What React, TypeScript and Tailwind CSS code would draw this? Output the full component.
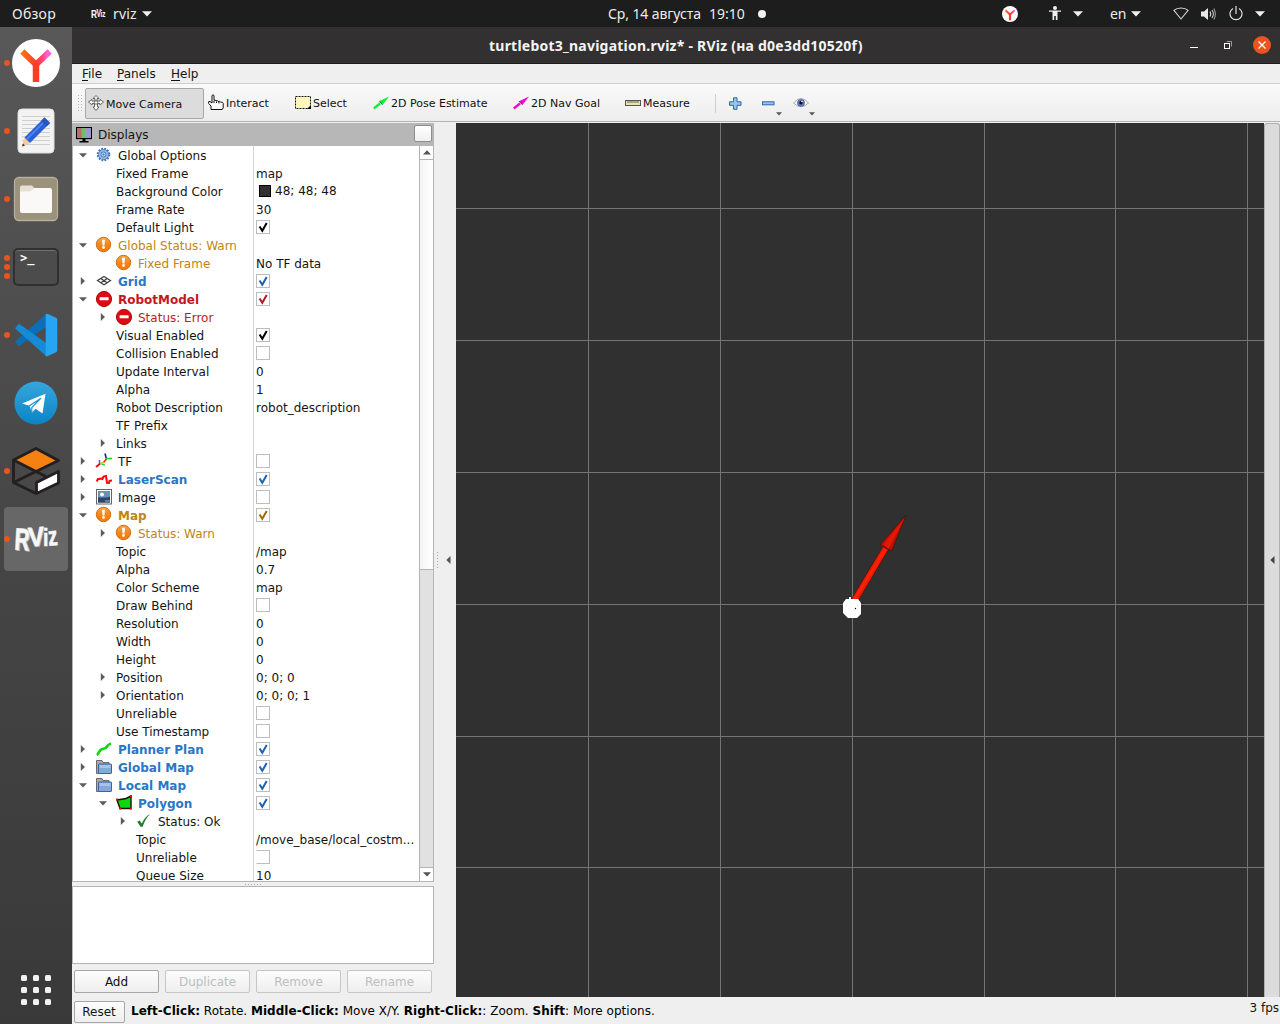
import React from "react";

type Tone = "plain" | "blue" | "red" | "warn";
type Row = {
  l: number;
  t: string;
  a?: "open" | "closed";
  i?: IconName;
  c?: Tone;
  b?: boolean;
  v?: string;
  check?: Tone | "off";
  swatch?: boolean;
};
type IconName = "gear" | "warn" | "error" | "grid" | "tf" | "laser" | "image" | "path" | "folder" | "polygon" | "ok";

const rows: Row[] = [
  { l: 0, t: "Global Options", a: "open", i: "gear" },
  { l: 1, t: "Fixed Frame", v: "map" },
  { l: 1, t: "Background Color", v: "48; 48; 48", swatch: true },
  { l: 1, t: "Frame Rate", v: "30" },
  { l: 1, t: "Default Light", check: "plain" },
  { l: 0, t: "Global Status: Warn", a: "open", i: "warn", c: "warn" },
  { l: 1, t: "Fixed Frame", i: "warn", c: "warn", v: "No TF data" },
  { l: 0, t: "Grid", a: "closed", i: "grid", c: "blue", b: true, check: "blue" },
  { l: 0, t: "RobotModel", a: "open", i: "error", c: "red", b: true, check: "red" },
  { l: 1, t: "Status: Error", a: "closed", i: "error", c: "red" },
  { l: 1, t: "Visual Enabled", check: "plain" },
  { l: 1, t: "Collision Enabled", check: "off" },
  { l: 1, t: "Update Interval", v: "0" },
  { l: 1, t: "Alpha", v: "1" },
  { l: 1, t: "Robot Description", v: "robot_description" },
  { l: 1, t: "TF Prefix" },
  { l: 1, t: "Links", a: "closed" },
  { l: 0, t: "TF", a: "closed", i: "tf", check: "off" },
  { l: 0, t: "LaserScan", a: "closed", i: "laser", c: "blue", b: true, check: "blue" },
  { l: 0, t: "Image", a: "closed", i: "image", check: "off" },
  { l: 0, t: "Map", a: "open", i: "warn", c: "warn", b: true, check: "warn" },
  { l: 1, t: "Status: Warn", a: "closed", i: "warn", c: "warn" },
  { l: 1, t: "Topic", v: "/map" },
  { l: 1, t: "Alpha", v: "0.7" },
  { l: 1, t: "Color Scheme", v: "map" },
  { l: 1, t: "Draw Behind", check: "off" },
  { l: 1, t: "Resolution", v: "0" },
  { l: 1, t: "Width", v: "0" },
  { l: 1, t: "Height", v: "0" },
  { l: 1, t: "Position", a: "closed", v: "0; 0; 0" },
  { l: 1, t: "Orientation", a: "closed", v: "0; 0; 0; 1" },
  { l: 1, t: "Unreliable", check: "off" },
  { l: 1, t: "Use Timestamp", check: "off" },
  { l: 0, t: "Planner Plan", a: "closed", i: "path", c: "blue", b: true, check: "blue" },
  { l: 0, t: "Global Map", a: "closed", i: "folder", c: "blue", b: true, check: "blue" },
  { l: 0, t: "Local Map", a: "open", i: "folder", c: "blue", b: true, check: "blue" },
  { l: 1, t: "Polygon", a: "open", i: "polygon", c: "blue", b: true, check: "blue" },
  { l: 2, t: "Status: Ok", a: "closed", i: "ok" },
  { l: 2, t: "Topic", v: "/move_base/local_costm..." },
  { l: 2, t: "Unreliable", check: "off" },
  { l: 2, t: "Queue Size", v: "10" },
];

const toneClass: Record<Tone, string> = {
  plain: "text-[#141414]",
  blue: "text-[#2a76c6]",
  red: "text-[#c2191c]",
  warn: "text-[#c0860f]",
};
const checkColor: Record<Tone, string> = { plain: "#000", blue: "#1f63a8", red: "#b01c20", warn: "#a06c00" };
const indent = ["ml-0", "ml-[20px]", "ml-[40px]"];

function TreeIcon({ name }: { name: IconName }) {
  const p = { width: 16, height: 16, viewBox: "0 0 16 16", className: "shrink-0 overflow-visible" };
  switch (name) {
    case "gear":
      return (
        <svg {...p}>
          <circle cx="7.5" cy="7.5" r="5.8" fill="none" stroke="#3f75bb" strokeWidth="2" strokeDasharray="1.8 1.24" />
          <circle cx="7.5" cy="7.5" r="5" fill="#9dbde3" stroke="#4a7fc4" />
          <circle cx="7.5" cy="7.5" r="2.6" fill="#c4d9f0" stroke="#3f75bb" />
          <circle cx="7.5" cy="7.5" r="1" fill="#3f75bb" />
        </svg>
      );
    case "warn":
      return (
        <svg {...p}>
          <defs>
            <linearGradient id="warnFill" x1="0" y1="0" x2="0" y2="1">
              <stop offset="0" stopColor="#fba64c" />
              <stop offset="0.5" stopColor="#f68519" />
              <stop offset="1" stopColor="#f57900" />
            </linearGradient>
          </defs>
          <circle cx="7.5" cy="7.5" r="7.2" fill="url(#warnFill)" stroke="#c9670a" strokeWidth="0.9" />
          <path d="M6 2.8h3l-.5 5.6h-2z" fill="#fff" />
          <circle cx="7.5" cy="10.5" r="1.4" fill="#fff" />
        </svg>
      );
    case "error":
      return (
        <svg {...p}>
          <circle cx="8" cy="8" r="7.6" fill="#dc0d12" stroke="#a40000" strokeWidth="0.9" />
          <rect x="3.6" y="6.3" width="9" height="3" rx=".5" fill="#fff" />
        </svg>
      );
    case "grid":
      return (
        <svg {...p} fill="none" stroke="#3c3c3c" strokeWidth="1.2">
          <path d="M8 3.5 14.5 7.5 8 11.7 1.5 7.5zM4.8 5.5l6.4 4.2M11.2 5.5 4.8 9.7" />
        </svg>
      );
    case "tf":
      return (
        <svg {...p} fill="none">
          <path d="M9 .5 10.3 5.5" stroke="#1515e8" strokeWidth="1.6" />
          <path d="M10 5.5H16M4 10.5 9 12.2" stroke="#10e010" strokeWidth="1.3" />
          <path d="M10.500 6 7.300 9.800" stroke="#e83018" strokeWidth="1.7" />
          <path d="M3.500 7v4" stroke="#5555e8" strokeWidth="1.500" />
          <path d="M0 14 4 10.700" stroke="#e81010" strokeWidth="1.800" />
          <path d="M4 10.500 8 9.500" stroke="#c8c820" strokeWidth="1.300" />
        </svg>
      );
    case "laser":
      return (
        <svg {...p} fill="none" stroke="#fa0505" strokeWidth="2">
          <path d="M.8 10.500 1.800 8.200 5 7.500 6.500 8 7.500 5.500 10 5 11 11.800 13 12 13.500 9.800 16 9.500" />
        </svg>
      );
    case "image":
      return (
        <svg {...p}>
          <rect x=".5" y=".5" width="15" height="14.500" fill="#fff" stroke="#62666a" />
          <rect x="2" y="2" width="12" height="11.500" fill="#28466f" />
          <rect x="2" y="2" width="12" height="6.500" fill="#6f8fb4" />
          <circle cx="6" cy="5.500" r="2" fill="#ffffd0" />
          <path d="M2 9.500 6 9l3 .5 5-2v6H2z" fill="#2c456a" />
          <path d="M9 12h5" stroke="#c4cedb" strokeWidth=".8" />
        </svg>
      );
    case "path":
      return (
        <svg {...p} fill="none" stroke="#0bd80b" strokeWidth="2.600">
          <path d="M.8 14C3.500 12.500 3 7.800 7.500 7.800 11.500 7.800 10.500 3.200 15 2.800" />
        </svg>
      );
    case "folder":
      return (
        <svg {...p}>
          <path d="M.5 14.500v-13h5.500l1 2h6v11z" fill="#aaa" stroke="#6a6a6a" />
          <rect x="2.500" y="5" width="13" height="9.500" rx=".6" fill="#82a9d8" stroke="#3465a4" />
          <path d="M3.500 6h11v3h-11z" fill="#a7c4e6" />
        </svg>
      );
    case "polygon":
      return (
        <svg {...p}>
          <path d="M1 5 10 3.500 15 1V13.500L4 13.500z" fill="#0bd80b" stroke="#111" strokeWidth="1.400" />
          <path d="M0 3.500h2v2H0zM14 0h2v2h-2zM14 12.500h2v2h-2zM3 12.500h2v2H3z" fill="#f00" />
        </svg>
      );
    case "ok":
      return (
        <svg {...p}>
          <path d="M1.200 8.800 3.800 7.500 5.800 10.500C8 6 10.500 2.500 14 1 10.500 4.500 8.500 8.500 6.600 13.800H4.600z" fill="#1f7c2b" />
        </svg>
      );
  }
}

function Check({ tone, cut }: { tone: Tone | "off"; cut?: boolean }) {
  return (
    <span
      className={"mb-px ml-[2px] block h-[14px] w-[14px] border border-[#bdbdbd] bg-white " + (cut ? "border-l-transparent" : "")}
    >
      {tone !== "off" && (
        <svg width="12" height="12" viewBox="0 0 12 12">
          <path d="M2.600 5.500 5.300 9.800 9.700 2" fill="none" stroke={checkColor[tone]} strokeWidth="2" />
        </svg>
      )}
    </span>
  );
}

function TreeRow({ r, cut }: { r: Row; cut: boolean }) {
  return (
    <div className="flex h-[18px] shrink-0 whitespace-pre">
      <div className="flex w-[181px] shrink-0 items-center border-r border-[#d4d4d4]">
        <span className={"flex w-[20px] shrink-0 justify-center " + indent[r.l]}>
          {r.a === "open" && (
            <svg width="8" height="5" viewBox="0 0 8 5">
              <path d="M0 .3h8L4 4.500z" fill="#5c5c5c" />
            </svg>
          )}
          {r.a === "closed" && (
            <svg width="6" height="8" viewBox="0 0 6 8">
              <path d="M.8 0v8L5 4z" fill="#5c5c5c" />
            </svg>
          )}
        </span>
        <span className="flex items-center pl-[3px]">
          {r.i && <TreeIcon name={r.i} />}
          <span className={"pt-px leading-[18px] " + (r.i ? "ml-[6px] " : "") + (r.b ? "font-bold " : "") + toneClass[r.c ?? "plain"]}>
            {r.t}
          </span>
        </span>
      </div>
      <div className="flex min-w-0 items-center">
        {r.swatch && <span className="ml-[5px] block h-3 w-3 border border-black bg-[#303030]" />}
        {r.v && <span className={r.swatch ? "ml-[4px] leading-[18px]" : "ml-[2px] pt-px leading-[18px]"}>{r.v}</span>}
        {r.check && <Check tone={r.check} cut={cut} />}
      </div>
    </div>
  );
}

function Caret({ className = "" }: { className?: string }) {
  return (
    <svg width="10" height="6" viewBox="0 0 10 6" className={className}>
      <path d="M0 .3h10L5 5.500z" fill="#f0f0f0" />
    </svg>
  );
}

function YandexMark({ size }: { size: number }) {
  return (
    <svg width={size} height={size} viewBox="0 0 48 48">
      <defs>
        <linearGradient id="yaMark" x1="8" y1="14" x2="40" y2="14" gradientUnits="userSpaceOnUse">
          <stop offset="0" stopColor="#ff7a0c" />
          <stop offset=".5" stopColor="#ff3b30" />
          <stop offset=".72" stopColor="#ff4a7a" />
          <stop offset=".85" stopColor="#ff5fd8" />
        </linearGradient>
      </defs>
      <circle cx="24" cy="24" r="24" fill="#fff" />
      <path d="M10.300 12.500 24 25.500 37.700 12.500" fill="none" stroke="url(#yaMark)" strokeWidth="6" />
      <path d="M24 24V43" stroke="#ff3b26" strokeWidth="6.500" />
    </svg>
  );
}

function TopBar() {
  return (
    <header className="flex h-[27px] shrink-0 items-center bg-[#1d1d1d] font-['Noto_Sans',sans-serif] text-[14px] text-[#ececec]">
      <div className="flex w-[560px] items-center">
        <span className="ml-[12px] w-[79px] tracking-[0.25px]">Обзор</span>
        <svg
          width="15"
          height="14"
          viewBox="0 0 15 14"
          className="overflow-visible"
          fontSize="10"
          fontWeight="bold"
          fill="#fff"
          fontFamily="Liberation Sans, sans-serif"
        >
          <text x="0" y="10.500" textLength="6" lengthAdjust="spacingAndGlyphs">R</text>
          <text x="5.500" y="9.500" textLength="4.500" lengthAdjust="spacingAndGlyphs">V</text>
          <text x="9.500" y="9.500" textLength="5" lengthAdjust="spacingAndGlyphs" fontSize="9">iz</text>
        </svg>
        <span className="ml-[7px] tracking-[0.2px]">rviz</span>
        <Caret className="ml-[5px]" />
      </div>
      <div className="flex items-center pl-[48px] whitespace-pre">
        <span className="w-[101px] tracking-[-0.1px]">Ср, 14 августа</span>
        <span className="w-[49px]">19:10</span>
        <span className="block h-[8px] w-[8px] rounded-full bg-[#f2f2f2]" />
      </div>
      <div className="ml-auto flex items-center pr-[15px]">
        <YandexMark size={16} />
        <svg width="12" height="15" viewBox="0 0 12 15" className="ml-[31px]" fill="#f0f0f0">
          <circle cx="6" cy="2" r="2" />
          <path d="M0 4.500h12v1.300H8.500V14H6.800v-4H5.200v4H3.500V5.800H0z" />
        </svg>
        <Caret className="ml-[12px]" />
        <span className="ml-[27px] w-[16px] tracking-[-0.1px]">en</span>
        <Caret className="ml-[5px]" />
        <svg width="16" height="13" viewBox="0 0 16 13" className="ml-[32px]" fill="none" stroke="#d8d8d8" strokeWidth="1.100">
          <path d="M8 12 .9 3.400C4.500.2 11.500.2 15.100 3.400z" />
        </svg>
        <svg width="15" height="14" viewBox="0 0 15 14" className="ml-[12px]" fill="none" stroke="#e8e8e8" strokeWidth="1.100">
          <path d="M0 4.500h3L7 1v12L3 9.500H0z" fill="#e8e8e8" stroke="none" />
          <path d="M9 4.500q1.600 2.500 0 5" />
          <path d="M11 3q2.800 4 0 8" stroke="#c8c8c8" />
          <path d="M12.800 1.500q3.200 5.500 0 11" stroke="#9a9a9a" />
        </svg>
        <svg width="14" height="15" viewBox="0 0 14 15" className="ml-[13px]" fill="none" stroke="#e2e2e2" strokeWidth="1.200">
          <path d="M7 0v8M4 2.500A6 6 0 1 0 10 2.500" />
        </svg>
        <Caret className="ml-[12px]" />
      </div>
    </header>
  );
}

function DockItem({ dots = 0, active, children }: { dots?: number; active?: boolean; children: React.ReactNode }) {
  return (
    <div className={"mx-[4px] mb-[4px] flex h-[64px] items-center rounded-[4px] " + (active ? "bg-[#676767]" : "")}>
      <div className="flex w-[6px] shrink-0 flex-col items-center gap-[3px]">
        {Array.from({ length: dots }, (_, k) => (
          <span key={k} className="block h-[6px] w-[6px] shrink-0 rounded-full bg-[#e95420]" />
        ))}
      </div>
      <div className="flex w-[52px] justify-center">{children}</div>
    </div>
  );
}

function Dock() {
  return (
    <nav className="flex w-[72px] shrink-0 flex-col bg-linear-to-b from-[#585858] via-[#464646] to-[#393939] pt-[4px]">
      <DockItem dots={1}>
        <YandexMark size={48} />
      </DockItem>
      <DockItem dots={1}>
        <svg width="38" height="46" viewBox="0 0 38 46">
          <rect x="1" y="1" width="36" height="44" rx="4" fill="#f3f3f3" stroke="#dedede" />
          <path d="M5 8.500h28M5 12.500h28M5 16.500h28M5 20.500h28M5 24.500h28M5 28.500h28M5 32.500h28M5 36.500h28" stroke="#cfcfcf" />
          <path d="m5 38.500 2.500-9 5.500 5.500z" fill="#f6c99b" />
          <path d="m5 38.500 1-3 2 2z" fill="#333" />
          <path d="m7.500 29.500 20-20 5.500 5.500-20 20z" fill="#2b62d6" />
          <path d="m9.500 31.500 20-20" stroke="#5a8bef" strokeWidth="1.500" />
          <path d="m24 13 3.500-3.500 5.500 5.500-3.500 3.500z" fill="#2456c4" />
        </svg>
      </DockItem>
      <DockItem dots={1}>
        <svg width="46" height="46" viewBox="0 0 46 46">
          <rect x="1.500" y="1.500" width="43" height="43" rx="4.500" fill="#9b927c" stroke="#b6ae9c" strokeWidth="1.300" />
          <path d="M7 11.500q0-2 2-2h10l3 3h-2l-2 4H7z" fill="#e7e0d2" />
          <path d="M7 15.500h10l4-3.500h16q2 0 2 2v21q0 2-2 2H9q-2 0-2-2z" fill="#faf9f8" />
        </svg>
      </DockItem>
      <DockItem dots={3}>
        <div className="h-[38px] w-[46px] rounded-[5px] border-2 border-[#303030] bg-[#4c4c4c] pt-[2px] pl-[5px] font-['DejaVu_Sans_Mono',monospace] text-[12px] leading-[12px] font-bold text-white shadow-[inset_0_1px_0_#707070]">
          &gt;<span>_</span>
        </div>
      </DockItem>
      <DockItem dots={1}>
        <svg width="44" height="44" viewBox="0 0 44 44" className="ml-px">
          <path d="M0 28.700 4 33 31 14V1z" fill="#0a6fb8" />
          <path d="M0 15.300 4 10.700 31 30V43z" fill="#158bd8" />
          <path d="M30.700 1Q31.500.3 33 1L41 4.800q1.300.6 1.300 2v30.400q0 1.400-1.300 2L33 43q-1.500.7-2.300 0z" fill="#27a5f3" />
        </svg>
      </DockItem>
      <DockItem>
        <svg width="44" height="44" viewBox="0 0 44 44">
          <defs>
            <linearGradient id="tgDisc" x1="0" y1="0" x2="0" y2="1">
              <stop offset="0" stopColor="#36a6dd" />
              <stop offset="1" stopColor="#0b84c6" />
            </linearGradient>
          </defs>
          <circle cx="22" cy="22" r="21.500" fill="url(#tgDisc)" />
          <path d="M8 22.500 31.500 12.800 28.500 32.500 21.500 27.800 18 31.500 15.500 24.800z" fill="#fff" />
          <path d="M15 25 27 17.200 17.800 26.500 17.800 31" fill="none" stroke="#1f93d2" strokeWidth="1.200" />
        </svg>
      </DockItem>
      <DockItem dots={1}>
        <svg width="48" height="48" viewBox="0 0 48 48" fill="none" stroke="#231f20" strokeWidth="2.800" strokeLinejoin="round">
          <path d="M1.500 13v22.500L24 46.500M1.500 35.500 24 24.500" />
          <path d="m24 1.500 22.500 12L24 24.500 1.500 13z" fill="#f58113" />
          <path d="M24 24.500l10 5" />
          <path d="M24.500 35.500 46.500 24.500V36L24.500 46.500z" fill="#fff" />
        </svg>
      </DockItem>
      <DockItem dots={1} active>
        <svg
          width="46"
          height="46"
          viewBox="0 -6 46 46"
          className="overflow-visible"
          fontFamily="Liberation Sans, sans-serif"
          fontWeight="bold"
          fill="#f7f7f7"
          stroke="#f7f7f7"
          strokeWidth=".6"
        >
          <g fill="#b4b4b4" stroke="#b4b4b4" transform="translate(1.200 .8)">
            <text x="1.500" y="28" fontSize="31" textLength="15" lengthAdjust="spacingAndGlyphs" transform="rotate(3 8 18)">R</text>
            <text x="15" y="24" fontSize="27" textLength="16" lengthAdjust="spacingAndGlyphs" transform="rotate(-4 22 15)">V</text>
          </g>
          <text x="1.500" y="28" fontSize="31" textLength="15" lengthAdjust="spacingAndGlyphs" transform="rotate(3 8 18)">R</text>
          <text x="15" y="24" fontSize="27" textLength="16" lengthAdjust="spacingAndGlyphs" transform="rotate(-4 22 15)">V</text>
          <text x="30" y="24" fontSize="24" textLength="5.500" lengthAdjust="spacingAndGlyphs">i</text>
          <text x="35" y="23.500" fontSize="27" textLength="9.500" lengthAdjust="spacingAndGlyphs" transform="rotate(-5 39 16)">z</text>
        </svg>
      </DockItem>
      <div className="mt-auto mb-[19px] ml-[21px] grid w-[30px] grid-cols-3 gap-[6px]">
        {Array.from({ length: 9 }, (_, k) => (
          <span key={k} className="block h-[6px] w-[6px] rounded-[1.5px] bg-[#f2f2f2]" />
        ))}
      </div>
    </nav>
  );
}

function Tool({ className, icon, label }: { className: string; icon: React.ReactNode; label: string }) {
  return (
    <div className={"flex shrink-0 items-center whitespace-pre " + className}>
      {icon}
      <span className="ml-[2px] pt-[4px]">{label}</span>
    </div>
  );
}

function PoseArrow({ color }: { color: string }) {
  return (
    <svg width="16" height="16" viewBox="0 0 16 16">
      <path d="M.8 13.500 7 8.500" stroke={color} strokeWidth="2.300" />
      <path d="M5.500 6.500 16 1.500 9.500 10z" fill={color} />
      <path d="m7 6.500 2.200 3" stroke="#222" strokeOpacity=".5" />
    </svg>
  );
}

function SmallDown({ className = "" }: { className?: string }) {
  return (
    <svg width="6" height="4" viewBox="0 0 6 4" className={className}>
      <path d="M0 .3h6L3 3.500z" fill="#555" />
    </svg>
  );
}

function Toolbar() {
  return (
    <div className="flex h-[39px] shrink-0 items-center border-t border-b border-t-[#cfcfcf] border-b-[#b4b4b4] bg-linear-to-b from-[#fafafa] to-[#ededed] text-[11px] text-[#111]">
      <div className="ml-[5px] h-[18px] w-[5px] bg-[radial-gradient(#b5b5b5_0.7px,transparent_0.9px)] bg-[length:3px_3px]" />
      <Tool
        className="mt-px ml-[3px] h-[31px] w-[119px] rounded-[2px] border border-[#a8a8a8] bg-[#dcdcdc] pl-[2px]"
        label="Move Camera"
        icon={
          <svg width="16" height="16" viewBox="0 0 16 16" fill="#fff" stroke="#5f665f" strokeWidth="1">
            <path d="m8 .5 3 3H9v2.500h3V4.500l3.500 2.500L12 10V8.500H9.500V12H11l-3 3.500L5 12h1.500V8.500H4V10L.5 7 4 4.500V6h3V3.500H5z" />
            <circle cx="8" cy="7.500" r="1.700" />
          </svg>
        }
      />
      <Tool
        className="ml-[4px] w-[87px]"
        label="Interact"
        icon={
          <svg width="16" height="17" viewBox="0 0 16 17" fill="#fff" stroke="#111" strokeWidth="1">
            <path d="M3 15.500V12L.7 9.500V7.500H2L4 9V1.500q1-1.500 2 0V6.500q1-1.300 2 .3Q9.500 5.800 10 7.500q2-.8 2.500.7 2.500-.3 2.700 1V14l-1 1.500z" />
            <path d="M6 7v2M8.500 7.500v1.500M11 8v1.500" />
          </svg>
        }
      />
      <Tool
        className="w-[78px]"
        label="Select"
        icon={
          <svg width="16" height="16" viewBox="0 0 16 16">
            <rect x=".5" y="1.500" width="15" height="12" fill="#fdf6bd" stroke="#111" strokeDasharray="2 1" />
            <path d="M16 10v4h-4z" />
          </svg>
        }
      />
      <Tool className="w-[140px]" label="2D Pose Estimate" icon={<PoseArrow color="#10ee38" />} />
      <Tool className="w-[112px]" label="2D Nav Goal" icon={<PoseArrow color="#f408d0" />} />
      <Tool
        className="w-[90px]"
        label="Measure"
        icon={
          <svg width="16" height="16" viewBox="0 0 16 16">
            <rect x=".5" y="5.500" width="15" height="5" fill="#e9e1ae" stroke="#555" />
            <path d="M3 6v2M5 6v2M7 6v2M9 6v2M11 6v2M13 6v2" stroke="#6b6651" />
          </svg>
        }
      />
      <div className="mt-px h-[19px] w-px bg-[#cdcdcd]" />
      <svg width="13" height="13" viewBox="0 0 13 13" className="mt-px ml-[13px]">
        <path d="M4.500.8h3.500v4h4v3.500h-4v4H4.500v-4h-4V4.800h4z" fill="#9bc3ea" stroke="#2f66a8" />
      </svg>
      <svg width="13" height="13" viewBox="0 0 13 13" className="mt-px ml-[20px]">
        <rect x=".5" y="4.800" width="11.500" height="3" fill="#9bc3ea" stroke="#2f66a8" />
      </svg>
      <SmallDown className="mt-[23px] ml-[1px]" />
      <svg width="16" height="12" viewBox="0 0 16 12" className="mt-px ml-[11px]">
        <path d="M.5 6Q8-3 15.500 6 8 13.500.5 6z" fill="#f5f5f5" stroke="#aaa" />
        <circle cx="8" cy="5.800" r="3.900" fill="#5a76b8" />
        <circle cx="8" cy="5.800" r="1.700" fill="#111" />
        <circle cx="9" cy="4.500" r=".8" fill="#fff" />
      </svg>
      <SmallDown className="mt-[23px]" />
    </div>
  );
}

function PanelButton({ label, disabled }: { label: string; disabled?: boolean }) {
  return (
    <button
      className={
        "h-[23px] w-[85px] rounded-[2px] border bg-linear-to-b from-[#fdfdfd] to-[#eeeeee] pt-px text-center leading-[21px] " +
        (disabled ? "border-[#c6c6c6] text-[#bebebe]" : "border-[#a6a6a6] text-[#111]")
      }
    >
      {label}
    </button>
  );
}

function DisplaysPanel() {
  return (
    <section className="flex w-[362px] shrink-0 flex-col">
      <div className="flex h-[23px] shrink-0 items-center bg-[#b7b7b7] pl-[4px]">
        <svg width="16" height="16" viewBox="0 0 16 16">
          <rect x=".5" y=".5" width="15" height="11" fill="#d9a0a0" stroke="#000" strokeWidth="1.300" />
          <rect x="1.200" y="1.200" width="4.600" height="9.600" fill="#b96c6c" />
          <rect x="5.800" y="1.200" width="4.600" height="9.600" fill="#6dc06d" />
          <rect x="10.400" y="1.200" width="4.400" height="9.600" fill="#9696df" />
          <path d="M6.500 12h3v2h3v1.500h-9V14h3z" />
        </svg>
        <span className="ml-[6px]">Displays</span>
        <span className="mr-[2px] mb-[2px] ml-auto block h-[17px] w-[18px] rounded-[2px] border border-[#8d8d8d] bg-linear-to-b from-white to-[#f0f0f0]" />
      </div>
      <div className="flex h-[736px] shrink-0 border-r border-b border-l border-[#b4b4b4] bg-white">
        <div className="flex min-w-0 flex-1 flex-col overflow-hidden">
          {rows.map((r, k) => (
            <TreeRow key={k} r={r} cut={k === 39} />
          ))}
        </div>
        <div className="flex w-[14px] shrink-0 flex-col border-l border-[#b4b4b4]">
          <div className="flex h-[14px] shrink-0 items-center justify-center border-b border-[#b4b4b4]">
            <svg width="8" height="5" viewBox="0 0 8 5"><path d="M0 4.500h8L4 .3z" fill="#555" /></svg>
          </div>
          <div className="h-[410px] shrink-0 border-b border-[#b4b4b4] bg-linear-to-r from-[#f4f4f4] to-white" />
          <div className="flex-1 bg-[#e1e1e1]" />
          <div className="flex h-[14px] shrink-0 items-center justify-center border-t border-[#b4b4b4]">
            <svg width="8" height="5" viewBox="0 0 8 5"><path d="M0 .3h8L4 4.500z" fill="#555" /></svg>
          </div>
        </div>
      </div>
      <div className="flex h-[4px] shrink-0 items-center justify-center">
        <span className="block h-px w-[17px] bg-[repeating-linear-gradient(90deg,#a8a8a8_0_1px,transparent_1px_3px)]" />
      </div>
      <div className="h-[78px] shrink-0 border border-[#b4b4b4] bg-white" />
      <div className="mt-[6px] flex gap-[6px] pl-[2px]">
        <PanelButton label="Add" />
        <PanelButton label="Duplicate" disabled />
        <PanelButton label="Remove" disabled />
        <PanelButton label="Rename" disabled />
      </div>
    </section>
  );
}

const gridX = [132.5, 264.5, 396.5, 528.5, 659.5, 791.5];
const gridY = [85.5, 217.5, 349.5, 481.5, 613.5, 744.5];

function Scene() {
  return (
    <svg width="808" height="874" viewBox="0 0 808 874" className="shrink-0 bg-[#303030]">
      {gridX.map((x) => (
        <path key={x} d={`M${x} 0V874`} stroke="#747474" />
      ))}
      {gridY.map((y) => (
        <path key={y} d={`M0 ${y}H808`} stroke="#747474" />
      ))}
      <path d="M395.500 476 427 423.500 432.500 426.500 402 478z" fill="#ee1a03" stroke="#3a0d08" strokeWidth=".6" />
      <path d="m398.500 476 31-50" stroke="#ff2404" strokeWidth="2" />
      <path d="M449.800 392.500 424.200 421.500 427.500 423.500 432 426 435.800 428z" fill="#b81203" stroke="#3a0d08" strokeWidth=".6" />
      <path d="M449 394.500 427.500 421.500 432.500 426z" fill="#e41803" />
      <path d="M390 476h3v-2h2v2h7l3 4v11l-4 4h-9l-5-5v-10z" fill="#fff" />
      <circle cx="399.500" cy="485.500" r=".7" />
    </svg>
  );
}

export default function App() {
  return (
    <div className="flex h-[1024px] w-[1280px] flex-col overflow-hidden bg-[#efefef] font-['DejaVu_Sans',sans-serif] text-[12px] text-[#141414]">
      <TopBar />
      <div className="flex min-h-0 flex-1">
        <Dock />
        <div className="flex w-[1208px] shrink-0 flex-col">
          <div className="flex h-[37px] shrink-0 items-center border-b border-[#1e1b1c] bg-[#333031] font-['Noto_Sans',sans-serif]">
            <span className="flex-1 pl-[417px] text-[14px] font-bold tracking-[0.23px] whitespace-pre text-[#f4f4f4]">
              turtlebot3_navigation.rviz* - RViz (на d0e3dd10520f)
            </span>
            <span className="mt-[4px] mr-[26px] block h-px w-[8px] bg-white" />
            <svg width="8" height="8" viewBox="0 0 8 8" className="mr-[21px]" fill="none">
              <rect x=".5" y="2.500" width="5" height="5" stroke="#fff" />
              <path d="M2.500.5h5v5" stroke="#999" />
            </svg>
            <span className="mr-[9px] flex h-[18px] w-[18px] items-center justify-center rounded-full bg-[#e95420]">
              <svg width="8" height="8" viewBox="0 0 8 8" stroke="#fff" strokeWidth="1.300">
                <path d="m.5.5 7 7m0-7-7 7" />
              </svg>
            </span>
          </div>
          <div className="flex h-[19px] shrink-0 items-center pl-[10px]">
            <span className="w-[35px]"><u className="underline-offset-2">F</u>ile</span>
            <span className="w-[54px]"><u className="underline-offset-2">P</u>anels</span>
            <span><u className="underline-offset-2">H</u>elp</span>
          </div>
          <Toolbar />
          <div className="mt-px flex h-[874px] shrink-0">
            <DisplaysPanel />
            <div className="flex w-[22px] shrink-0 items-center">
              <span className="ml-[3px] block h-[17px] w-px bg-[repeating-linear-gradient(180deg,#a8a8a8_0_1px,transparent_1px_3px)]" />
              <svg width="5" height="8" viewBox="0 0 5 8" className="ml-[7.5px]"><path d="M4.500 0v8L.3 4z" fill="#555" /></svg>
            </div>
            <Scene />
            <div className="flex w-[16px] items-center rounded-t-[3px] border-x border-t border-[#b0b0b0] bg-[#dcdcdc] pl-[4.5px]">
              <svg width="5" height="8" viewBox="0 0 5 8" className="mb-[2px]"><path d="M4.500 0v8L.3 4z" fill="#444" /></svg>
            </div>
          </div>
          <div className="flex h-[27px] shrink-0 items-center pl-[2px] whitespace-pre">
            <button className="mt-[2px] h-[22px] w-[51px] rounded-[2px] border border-[#a6a6a6] bg-linear-to-b from-[#fdfdfd] to-[#eeeeee] pr-px leading-[21px]">
              Reset
            </button>
            <span className="ml-[6px] pt-px tracking-[0.03px] text-black">
              <b>Left-Click:</b> Rotate. <b>Middle-Click:</b> Move X/Y. <b>Right-Click:</b>: Zoom. <b>Shift</b>: More options.
            </span>
            <span className="mr-[1px] mb-[5px] ml-auto">3 fps</span>
          </div>
        </div>
      </div>
    </div>
  );
}
